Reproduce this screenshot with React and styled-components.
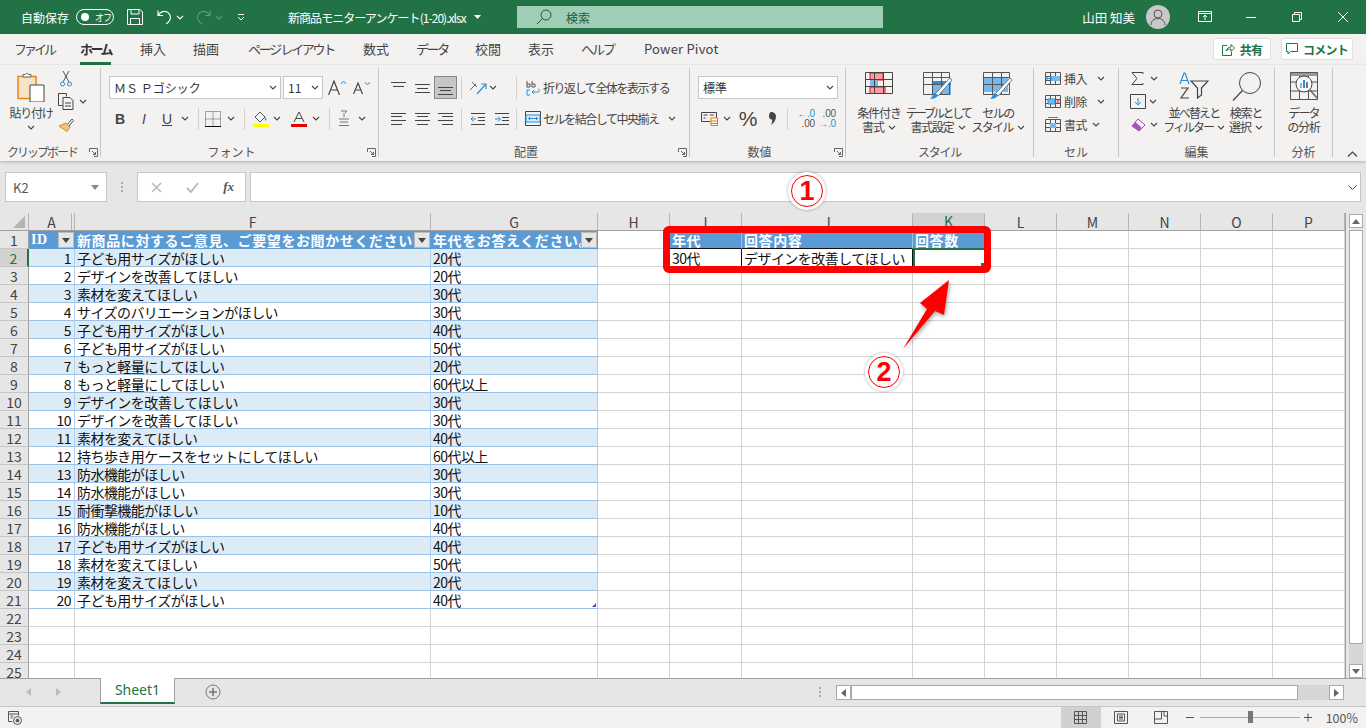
import styled, { createGlobalStyle, css } from "styled-components";

const GlobalStyle = createGlobalStyle`
  html, body { margin: 0; padding: 0; background: #f3f2f1; }
  body { font-family: "Noto Sans CJK JP", "Noto Sans", sans-serif; font-size: 12px; color: #444; overflow: hidden; }
  svg { display: block; flex: none; }
`;

const BLUE = "#2b8fd6";
const INK = "#444";

const Chevron = ({ color = "#444" }) => (
  <svg width="8" height="5" viewBox="0 0 8 5"><path d="M1 1l3 3 3-3" fill="none" stroke={color} strokeWidth="1.1" /></svg>
);
const Launcher = () => (
  <svg width="9" height="9" viewBox="0 0 9 9"><path d="M.5 4V.5h8v8H5M3 3l3.5 3.5M6.5 4v2.5H4" fill="none" stroke="#666" /></svg>
);
const Lines = ({ rows }) => (
  <svg width="15" height="14" viewBox="0 0 15 14">
    {rows.map(([x1, x2, y]) => <path key={y} d={`M${x1} ${y}.5H${x2}`} stroke={INK} />)}
  </svg>
);

const ROWS = [
  [1, "子ども用サイズがほしい", "20代"], [2, "デザインを改善してほしい", "20代"], [3, "素材を変えてほしい", "30代"],
  [4, "サイズのバリエーションがほしい", "30代"], [5, "子ども用サイズがほしい", "40代"], [6, "子ども用サイズがほしい", "50代"],
  [7, "もっと軽量にしてほしい", "20代"], [8, "もっと軽量にしてほしい", "60代以上"], [9, "デザインを改善してほしい", "30代"],
  [10, "デザインを改善してほしい", "30代"], [11, "素材を変えてほしい", "40代"], [12, "持ち歩き用ケースをセットにしてほしい", "60代以上"],
  [13, "防水機能がほしい", "30代"], [14, "防水機能がほしい", "30代"], [15, "耐衝撃機能がほしい", "10代"],
  [16, "防水機能がほしい", "40代"], [17, "子ども用サイズがほしい", "40代"], [18, "素材を変えてほしい", "50代"],
  [19, "素材を変えてほしい", "20代"], [20, "子ども用サイズがほしい", "40代"],
];
const COLS = ["A", "F", "G", "H", "I", "J", "K", "L", "M", "N", "O", "P"];
const TABS = [
  ["ファイル", 66, -3], ["ホーム", 60, -2.5], ["挿入", 53, 0], ["描画", 55, 0], ["ページ レイアウト", 115, -2.3],
  ["数式", 53, 0], ["データ", 59, -2.4], ["校閲", 53, 0], ["表示", 53, 0], ["ヘルプ", 63, -2], ["Power Pivot", 90, 0.2],
];

function cellFor(col, row) {
  if (row === 1) {
    if (col === "A") return { kind: "head", text: "ID", serif: true, filter: true };
    if (col === "F") return { kind: "head", text: "新商品に対するご意見、ご要望をお聞かせください", filter: true };
    if (col === "G") return { kind: "head", text: "年代をお答えください。", filter: true };
    if (col === "I") return { kind: "sub", text: "年代" };
    if (col === "J") return { kind: "sub", text: "回答内容" };
    if (col === "K") return { kind: "subLast", text: "回答数" };
  }
  if (row === 2) {
    if (col === "I") return { kind: "box", text: "30代" };
    if (col === "J") return { kind: "box", text: "デザインを改善してほしい" };
    if (col === "K") return { kind: "selected", text: "" };
  }
  const data = ROWS[row - 2];
  if (data && (col === "A" || col === "F" || col === "G")) {
    const kind = row % 2 === 0 ? "band" : "line";
    if (col === "A") return { kind, text: data[0], right: true };
    if (col === "F") return { kind, text: data[1] };
    return { kind, text: data[2], corner: row === 21 };
  }
  return { kind: "empty", text: "" };
}

function App() {
  const rowNums = Array.from({ length: 25 }, (_, i) => i + 1);
  return (
    <Page>
      <GlobalStyle />
      <TitleBar>
        <AutoSave>自動保存</AutoSave>
        <Toggle><ToggleKnob /><ToggleText>オフ</ToggleText></Toggle>
        <Slot $w={42}>
          <svg width="16" height="16" viewBox="0 0 16 16" fill="none" stroke="#fff"><path d="M.5.500h12.500l2.500 2.500v12.500H.5zM4 .5v4.500h8V.5M3.500 15.500V9.500h9v6" /></svg>
        </Slot>
        <Slot $w={18}>
          <svg width="16" height="16" viewBox="0 0 16 16" fill="none" stroke="#fff" strokeWidth="1.2"><path d="M1 1.500v5h5M1.300 6.300C3 3 6.500 1.500 9.500 2.800c3.500 1.500 5 5.200 3.200 8.500-.8 1.500-2 2.700-3.700 3.500" /></svg>
        </Slot>
        <Slot $w={12}><Chevron color="#fff" /></Slot>
        <Slot $w={4} />
        <Slot $w={26}>
          <svg width="16" height="16" viewBox="0 0 16 16" fill="none" stroke="#5d9a78" strokeWidth="1.2"><path d="M15 1.500v5h-5M14.700 6.300C13 3 9.500 1.500 6.500 2.800c-3.500 1.500-5 5.200-3.200 8.500.8 1.500 2 2.700 3.700 3.500" /></svg>
        </Slot>
        <Slot $w={6}><Chevron color="#5d9a78" /></Slot>
        <Slot $w={38}>
          <svg width="8" height="7" viewBox="0 0 8 7" fill="none" stroke="#fff"><path d="M1 .5h6" /><path d="M1 3l3 3 3-3" /></svg>
        </Slot>
        <FileName>新商品モニターアンケート(1-20).xlsx</FileName>
        <Slot $w={18}><svg width="7" height="4" viewBox="0 0 7 4"><path d="M0 0h7L3.500 4z" fill="#fff" /></svg></Slot>
        <SearchBox>
          <svg width="16" height="16" viewBox="0 0 16 16" fill="none" stroke="#1d5c3a"><circle cx="10" cy="6" r="5" /><path d="M6.500 9.500L1 15" /></svg>
          <SearchText>検索</SearchText>
        </SearchBox>
        <TitleRight>
          <UserName>山田 知美</UserName>
          <Avatar>
            <svg width="16" height="16" viewBox="0 0 16 16" fill="none" stroke="#555"><circle cx="8" cy="5" r="4" /><path d="M1 16c0-4 3-6.500 7-6.500S15 12 15 16" /></svg>
          </Avatar>
          <Slot $w={46}>
            <svg width="14" height="12" viewBox="0 0 14 12" fill="none" stroke="#fff"><path d="M.5.500h13v10H.5zM.5 2.500h13M7 9V4.500M5 6l2-2 2 2" /></svg>
          </Slot>
          <Slot $w={46}><svg width="10" height="1" viewBox="0 0 10 1"><path d="M0 .5h10" stroke="#fff" /></svg></Slot>
          <Slot $w={46}>
            <svg width="10" height="10" viewBox="0 0 10 10" fill="none" stroke="#fff"><path d="M.5 2.500h7v7h-7zM2.500 2.500V.5h7v7h-2" /></svg>
          </Slot>
          <Slot $w={46}><svg width="10" height="10" viewBox="0 0 10 10"><path d="M0 0l10 10M10 0L0 10" stroke="#fff" /></svg></Slot>
        </TitleRight>
      </TitleBar>

      <TabBar>
        {TABS.map(([label, w, ls]) => (
          <Tab key={label} $w={w}>
            <TabLabel $active={label === "ホーム"} $ls={ls}>{label}</TabLabel>
          </Tab>
        ))}
        <TabActions>
          <ShareButton $w={58}>
            <svg width="13" height="13" viewBox="0 0 13 13" fill="none" stroke="#217346"><path d="M5 2.500H.5v10h9V9M4 8c.5-2.500 3-4 5-4V1.500L12.500 5 9 8.500V6C7 6 5 6.500 4 8z" /></svg>
            共有
          </ShareButton>
          <ShareButton $w={72}>
            <svg width="12" height="12" viewBox="0 0 12 12" fill="none" stroke="#217346"><path d="M.5.500h11v8h-7L2 11V8.500H.5z" /></svg>
            コメント
          </ShareButton>
        </TabActions>
      </TabBar>

      <Ribbon>
        <Group $w={101}>
          <GroupBody>
            <LargeTool $w={62}>
              <LargeIcon>
                <svg width="28" height="30" viewBox="0 0 28 30" fill="none">
                  <path d="M1 4.500h18v22H1z" fill="#f8e3c4" stroke="#e08a18" strokeWidth="1.500" />
                  <path d="M6 5V2.500h2.500C9 1 11 1 11.500 2.500H14V5z" fill="#fff" stroke="#666" />
                  <path d="M13 13h14v17H13z" fill="#fff" stroke="#444" />
                </svg>
              </LargeIcon>
              <LargeText $ls={-1.2}>貼り付け</LargeText>
              <LargeText><Chevron /></LargeText>
            </LargeTool>
            <SmallStack $ml={-4}>
              <SmallRow>
                <Slot $w={2} />
                <svg width="12" height="16" viewBox="0 0 12 16" fill="none" stroke="#555"><path d="M3 0l6 11M9 0L3 11" /><circle cx="2.500" cy="13" r="2" stroke={BLUE} /><circle cx="9.500" cy="13" r="2" stroke={BLUE} /></svg>
              </SmallRow>
              <SmallRow>
                <svg width="17" height="17" viewBox="0 0 17 17" fill="none" stroke="#444"><path d="M.5.500h8v3M.5.500v12h4M5 4.500h7l3 3v9H5zM7 10h6M7 13h6" /></svg>
                <Slot $w={4} />
                <Chevron />
              </SmallRow>
              <SmallRow>
                <svg width="16" height="14" viewBox="0 0 16 14" fill="none"><path d="M9 7l5-6 1.500 1.500L11 8" stroke="#555" /><path d="M1 8l7-3 4 4-3 4.500L1 8z" fill="#f5c078" stroke="#e08a18" /></svg>
              </SmallRow>
            </SmallStack>
          </GroupBody>
          <GroupLabel $ls={-2} $launch>クリップボード<LauncherSpot><Launcher /></LauncherSpot></GroupLabel>
        </Group>

        <Group $w={278}>
          <GroupBody $stack>
            <ToolRow $pad={8}>
              <ComboBox $w={172}>
                <ComboText>ＭＳ Ｐゴシック</ComboText>
                <Chevron />
              </ComboBox>
              <Slot $w={2} />
              <ComboBox $w={40}><ComboText>11</ComboText><Chevron /></ComboBox>
              <Slot $w={5} />
              <Tool $w={19}>
                <svg width="19" height="15" viewBox="0 0 19 15" fill="none" stroke={INK}><path d="M.5 15L6 1l5.500 14M2.500 10h7" strokeWidth="1.200" /><path d="M13 4l2.500-3L18 4" stroke={BLUE} /></svg>
              </Tool>
              <Slot $w={6} />
              <Tool $w={19}>
                <svg width="19" height="13" viewBox="0 0 19 13" fill="none" stroke={INK}><path d="M.5 13L5 2l4.500 11M2 9h6" strokeWidth="1.200" /><path d="M12 1l2.500 3L17 1" stroke={BLUE} /></svg>
              </Tool>
            </ToolRow>
            <ToolRow $pad={7}>
              <Tool $w={24}><ToolGlyph $bold>B</ToolGlyph></Tool>
              <Tool $w={24}><ToolGlyph $italic>I</ToolGlyph></Tool>
              <Tool $w={22}><ToolGlyph $under>U</ToolGlyph></Tool>
              <Tool $w={14}><Chevron /></Tool>
              <ToolSep $ml={6} $mr={3} />
              <Tool $w={22}>
                <svg width="16" height="16" viewBox="0 0 16 16" fill="none" stroke="#555" strokeDasharray="1 1"><path d="M.5.500h15v15H.5zM8 .5v15M.5 8h15" /><path d="M0 15.500h16" stroke="#111" strokeDasharray="none" /></svg>
              </Tool>
              <Tool $w={14}><Chevron /></Tool>
              <ToolSep $ml={6} $mr={5} />
              <Tool $w={22}>
                <svg width="16" height="16" viewBox="0 0 16 16" fill="none"><path d="M7 1L2 6l5 5 5-5z" stroke="#555" /><path d="M12 6c1.500 1.500 2 3 1 3.500s-1.500-1-1-3.500z" fill={BLUE} /><path d="M0 13h16v3H0z" fill="#ffff00" /></svg>
              </Tool>
              <Tool $w={10}><Chevron /></Tool>
              <Slot $w={6} />
              <Tool $w={22}>
                <svg width="16" height="16" viewBox="0 0 16 16" fill="none"><path d="M3 11L8 1l5 10M5 7.500h6" stroke="#444" /><path d="M0 13h16v3H0z" fill="#e60000" /></svg>
              </Tool>
              <Tool $w={12}><Chevron /></Tool>
              <ToolSep $ml={7} $mr={2} />
              <Tool $w={24}>
                <svg width="12" height="17" viewBox="0 0 12 17" fill="none" stroke="#777"><path d="M3 1h6L7 3M6 3v4M1 9h10M2 12h8M1 15.500h10" /></svg>
              </Tool>
              <Tool $w={12}><Chevron /></Tool>
            </ToolRow>
          </GroupBody>
          <GroupLabel $launch>フォント<LauncherSpot><Launcher /></LauncherSpot></GroupLabel>
        </Group>

        <Group $w={311}>
          <GroupBody $stack>
            <ToolRow $pad={7}>
              <Tool $w={24}><Lines rows={[[0, 15, 1], [2, 13, 5]]} /></Tool>
              <Tool $w={24}><Lines rows={[[0, 15, 3], [2, 13, 7], [0, 15, 11]]} /></Tool>
              <SelectedTool $w={23}><Lines rows={[[0, 15, 6], [2, 13, 9], [0, 15, 13]]} /></SelectedTool>
              <ToolSep $ml={4} $mr={4} />
              <Tool $w={24}>
                <svg width="18" height="14" viewBox="0 0 18 14" fill="none"><path d="M1 9l6-6M3 1l5 5" stroke="#666" /><path d="M8 13l8-9M12 3h5v5" stroke={BLUE} strokeWidth="1.200" /></svg>
              </Tool>
              <Tool $w={6}><Chevron /></Tool>
              <ToolSep $ml={20} $mr={7} />
              <Tool $w={18}>
                <svg width="15" height="16" viewBox="0 0 15 16" fill="none"><path d="M1 7.500V1M1 4h3v3H1M6 1v6h3V4H6" stroke="#555" /><path d="M4 15H1v-5h3M6 12h6c2 0 2-3 0-3M8 10l-2 2 2 2" stroke={BLUE} /></svg>
              </Tool>
              <WideText>折り返して全体を表示する</WideText>
            </ToolRow>
            <ToolRow $pad={7}>
              <Tool $w={24}><Lines rows={[[0, 15, 1], [0, 11, 4], [0, 15, 8], [0, 11, 12]]} /></Tool>
              <Tool $w={24}><Lines rows={[[0, 15, 1], [2, 13, 4], [0, 15, 8], [2, 13, 12]]} /></Tool>
              <Tool $w={23}><Lines rows={[[0, 15, 1], [4, 15, 4], [0, 15, 8], [4, 15, 12]]} /></Tool>
              <ToolSep $ml={4} $mr={4} />
              <Tool $w={24}>
                <svg width="14" height="12" viewBox="0 0 14 12" fill="none"><path d="M0 .5h14M7 4.500h7M7 7.500h7M0 11.500h14" stroke="#444" /><path d="M5 6H0M2.500 3.500L0 6l2.500 2.500" stroke={BLUE} /></svg>
              </Tool>
              <Tool $w={24}>
                <svg width="14" height="12" viewBox="0 0 14 12" fill="none"><path d="M0 .5h14M7 4.500h7M7 7.500h7M0 11.500h14" stroke="#444" /><path d="M0 6h5M3 3.500L5.500 6 3 8.500" stroke={BLUE} /></svg>
              </Tool>
              <ToolSep $ml={2} $mr={7} />
              <Tool $w={18}>
                <svg width="16" height="15" viewBox="0 0 16 15" fill="none" stroke="#444"><path d="M.5.500h15v14H.5z" /><path d="M1 4h14v7H1z" fill="#d6ecfb" stroke={BLUE} /><path d="M3.500 7.500h9M5 6L3.500 7.500 5 9M11 6l1.500 1.500L11 9" stroke={BLUE} /></svg>
              </Tool>
              <WideText>セルを結合して中央揃え</WideText>
              <Slot $w={9} />
              <Chevron />
            </ToolRow>
          </GroupBody>
          <GroupLabel $launch>配置<LauncherSpot><Launcher /></LauncherSpot></GroupLabel>
        </Group>

        <Group $w={156}>
          <GroupBody $stack>
            <ToolRow $pad={8}>
              <ComboBox $w={140}><ComboText>標準</ComboText><Chevron /></ComboBox>
            </ToolRow>
            <ToolRow $pad={9}>
              <Tool $w={20}>
                <svg width="17" height="15" viewBox="0 0 17 15" fill="none"><path d="M.5 1.500h15V10M.5 1.500v9H9M2.500 4h4M9 4h4M2.500 7h2" stroke="#444" /><path d="M10 7h6.500v7.500H10zM10 10h6.500M10 12.500h6.500" stroke="#e57a00" fill="#fff" /></svg>
              </Tool>
              <Tool $w={16}><Chevron /></Tool>
              <Tool $w={26}><PercentGlyph>%</PercentGlyph></Tool>
              <Tool $w={24}>
                <svg width="8" height="13" viewBox="0 0 8 13"><path d="M2 0c3 0 5 2 5 4.500 0 3.500-2 6.500-5 8.500 1-2.500 1.500-4 1-5.500C1 7.500 0 6 0 4s1-4 2-4z" fill="#444" /></svg>
              </Tool>
              <ToolSep $ml={2} $mr={5} />
              <Tool $w={26}><DecimalGlyph $flip={false} /></Tool>
              <Tool $w={16}><DecimalGlyph $flip /></Tool>
            </ToolRow>
          </GroupBody>
          <GroupLabel $launch>数値<LauncherSpot><Launcher /></LauncherSpot></GroupLabel>
        </Group>

        <Group $w={188}>
          <GroupBody>
            <LargeTool $w={66}>
              <LargeIcon>
                <svg width="28" height="22" viewBox="0 0 28 22" fill="none">
                  <path d="M5 1h13v7H5zM5 15h15v7H5z" fill="#ff9da4" stroke="#e01010" />
                  <path d="M5 8h8v7H5z" fill="#79b8ea" />
                  <path d="M.5.500h27v21H.5zM.5 7.500h27M.5 14.500h27M9.500.5v21M18.500.5v21" stroke="#444" />
                </svg>
              </LargeIcon>
              <LargeText $ls={-1.1}>条件付き</LargeText>
              <LargeText $ls={-1}>書式<ChevronGap><Chevron /></ChevronGap></LargeText>
            </LargeTool>
            <LargeTool $w={52}>
              <LargeIcon><BrushTable full /></LargeIcon>
              <LargeText $ls={-2.6}>テーブルとして</LargeText>
              <LargeText $ls={-1.2}>書式設定<ChevronGap><Chevron /></ChevronGap></LargeText>
            </LargeTool>
            <LargeTool $w={68}>
              <LargeIcon><BrushTable /></LargeIcon>
              <LargeText $ls={-1.5}>セルの</LargeText>
              <LargeText $ls={-1.7}>スタイル<ChevronGap><Chevron /></ChevronGap></LargeText>
            </LargeTool>
          </GroupBody>
          <GroupLabel $ls={-1.2}>スタイル</GroupLabel>
        </Group>

        <Group $w={85}>
          <GroupBody>
            <SmallStack>
              <SmallRow $pad={11}>
                <svg width="16" height="13" viewBox="0 0 16 13" fill="none"><path d="M.5.500h15v12H.5zM.5 4.500h15M.5 8.500h15M5.500.5v12M10.500.5v12" stroke="#555" /><path d="M6 4h9v5H6z" fill="#79b8ea" /><path d="M7 6.500H1M3 4.500l-2 2 2 2" stroke={BLUE} /></svg>
                <CellToolText>挿入</CellToolText>
                <Slot $w={10} />
                <Chevron />
              </SmallRow>
              <SmallRow $pad={11}>
                <svg width="16" height="13" viewBox="0 0 16 13" fill="none"><path d="M.5.500h15v12H.5zM.5 4.500h15M.5 8.500h15M5.500.5v12M10.500.5v12" stroke="#555" /><path d="M3 4h7v5H3z" fill="#79b8ea" stroke={BLUE} /><path d="M11 4.500l4 4M15 4.500l-4 4" stroke="#e03030" /></svg>
                <CellToolText>削除</CellToolText>
                <Slot $w={10} />
                <Chevron />
              </SmallRow>
              <SmallRow $pad={11}>
                <svg width="16" height="15" viewBox="0 0 16 15" fill="none"><path d="M.5 2.500h15v12H.5zM.5 6.500h15M.5 10.500h15M5.500 2.500v12M10.500 2.500v12" stroke="#555" /><path d="M5 6h6v5H5z" fill="#79b8ea" /><path d="M3 .5h10" stroke={BLUE} /></svg>
                <CellToolText>書式</CellToolText>
                <Slot $w={5} />
                <Chevron />
              </SmallRow>
            </SmallStack>
          </GroupBody>
          <GroupLabel>セル</GroupLabel>
        </Group>

        <Group $w={156}>
          <GroupBody>
            <SmallStack $w={47}>
              <SmallRow $pad={12}>
                <svg width="13" height="13" viewBox="0 0 13 13" fill="none" stroke="#444"><path d="M12 2V.5H1l5 6-5 6h11V11" /></svg>
                <Slot $w={6} />
                <Chevron />
              </SmallRow>
              <SmallRow $pad={11}>
                <svg width="16" height="15" viewBox="0 0 16 15" fill="none"><path d="M.5.500h15v14H.5z" stroke="#444" /><path d="M8 4v7M5 8l3 3 3-3" stroke={BLUE} /></svg>
                <Slot $w={3} />
                <Chevron />
              </SmallRow>
              <SmallRow $pad={12}>
                <svg width="15" height="14" viewBox="0 0 15 14" fill="none"><path d="M1 8l6-7 7 6-6 6z" fill="#fff" stroke="#a23cb4" /><path d="M1 8l3.500-4 6 5.500L8 13z" fill="#b04ec4" /></svg>
                <Slot $w={4} />
                <Chevron />
              </SmallRow>
            </SmallStack>
            <LargeTool $w={56}>
              <LargeIcon>
                <svg width="30" height="28" viewBox="0 0 30 28" fill="none">
                  <path d="M1 12L5 1h1l4 11M2.500 8.500h6" stroke={BLUE} strokeWidth="1.200" />
                  <path d="M2 16h7l-7 10h8" stroke="#444" strokeWidth="1.200" />
                  <path d="M12 9h17l-6.500 7v7l-4 3V16z" stroke="#444" strokeWidth="1.200" />
                </svg>
              </LargeIcon>
              <LargeText $ls={-1.8}>並べ替えと</LargeText>
              <LargeText $ls={-2}>フィルター<ChevronGap><Chevron /></ChevronGap></LargeText>
            </LargeTool>
            <LargeTool $w={48}>
              <LargeIcon>
                <svg width="29" height="29" viewBox="0 0 29 29" fill="none" stroke="#444"><circle cx="18" cy="11" r="10.500" /><path d="M10.500 18.500L1 28.500" strokeWidth="1.200" /></svg>
              </LargeIcon>
              <LargeText $ls={-1.2}>検索と</LargeText>
              <LargeText $ls={-1}>選択<ChevronGap><Chevron /></ChevronGap></LargeText>
            </LargeTool>
          </GroupBody>
          <GroupLabel>編集</GroupLabel>
        </Group>

        <Group $w={58}>
          <GroupBody>
            <LargeTool $w={57}>
              <LargeIcon>
                <svg width="28" height="28" viewBox="0 0 28 28" fill="none">
                  <path d="M0 0h28v4H0z" fill="#999" />
                  <path d="M.5.500h27v27H.5zM.5 10h27M.5 19h27M9.500 4v24M18.500 4v24" stroke="#555" />
                  <circle cx="14" cy="12" r="8" fill="#fff" stroke="#444" />
                  <path d="M10 11h2v5h-2z" fill="#79b8ea" /><path d="M13 8h2v8h-2z" fill="#2b8fd6" /><path d="M16 10h2v6h-2z" fill="#777" />
                  <path d="M20 18l7 8" stroke="#666" strokeWidth="1.500" />
                </svg>
              </LargeIcon>
              <LargeText $ls={-1.8}>データ</LargeText>
              <LargeText $ls={-1.2}>の分析</LargeText>
            </LargeTool>
          </GroupBody>
          <GroupLabel>分析</GroupLabel>
        </Group>
        <Collapse>
          <svg width="11" height="6" viewBox="0 0 11 6"><path d="M1 5.500l4.500-4.500L10 5.500" fill="none" stroke="#444" strokeWidth="1.200" /></svg>
        </Collapse>
      </Ribbon>

      <FormulaBar>
        <NameBox>
          K2
          <svg width="8" height="5" viewBox="0 0 8 5"><path d="M0 0h8L4 5z" fill="#888" /></svg>
        </NameBox>
        <BarDots><i /><i /><i /></BarDots>
        <FormulaButtons>
          <svg width="11" height="11" viewBox="0 0 11 11"><path d="M1 1l9 9M10 1l-9 9" stroke="#b8b8b8" strokeWidth="1.500" /></svg>
          <svg width="13" height="11" viewBox="0 0 13 11"><path d="M1 6l4 4 7-9" fill="none" stroke="#b8b8b8" strokeWidth="1.800" /></svg>
          <FxText>fx</FxText>
        </FormulaButtons>
        <FormulaInput>
          <svg width="9" height="5" viewBox="0 0 9 5"><path d="M.5.500l4 4 4-4" fill="none" stroke="#444" /></svg>
        </FormulaInput>
      </FormulaBar>

      <SheetArea>
        <SheetGrid>
          <Corner><svg width="12" height="12" viewBox="0 0 12 12"><path d="M12 0v12H0z" fill="#b4b4b4" /></svg></Corner>
          {COLS.map((c) => <ColHead key={c} $selected={c === "K"} $hiddenNext={c === "A"}>{c}</ColHead>)}
          {rowNums.map((r) => [
            <RowHead key={`h${r}`} $selected={r === 2}>{r}</RowHead>,
            ...COLS.map((c) => {
              const cell = cellFor(c, r);
              return (
                <Cell key={c + r} $kind={cell.kind} $right={cell.right} $corner={cell.corner} $serif={cell.serif}>
                  <CellText $head={cell.kind === "head" || cell.kind === "sub" || cell.kind === "subLast"}>{cell.text}</CellText>
                  {cell.filter && (
                    <FilterButton><svg width="8" height="5" viewBox="0 0 8 5"><path d="M0 0h8L4 5z" fill="#444" /></svg></FilterButton>
                  )}
                </Cell>
              );
            }),
          ])}
        </SheetGrid>
        <VScroll>
          <ScrollButton><svg width="8" height="5" viewBox="0 0 8 5"><path d="M4 0l4 5H0z" fill="#666" /></svg></ScrollButton>
          <VThumb />
          <VTrack />
          <ScrollButton><svg width="8" height="5" viewBox="0 0 8 5"><path d="M0 0h8L4 5z" fill="#666" /></svg></ScrollButton>
        </VScroll>
      </SheetArea>

      <SheetBar>
        <SheetNav>
          <svg width="5" height="8" viewBox="0 0 5 8"><path d="M5 0v8L0 4z" fill="#bbb" /></svg>
          <svg width="5" height="8" viewBox="0 0 5 8"><path d="M0 0v8l5-4z" fill="#bbb" /></svg>
        </SheetNav>
        <SheetTab>Sheet1</SheetTab>
        <AddSheet>
          <svg width="16" height="16" viewBox="0 0 16 16" fill="none" stroke="#777"><circle cx="8" cy="8" r="7" /><path d="M8 4v8M4 8h8" strokeWidth="1.600" /></svg>
        </AddSheet>
        <BarDotsSmall><i /><i /><i /></BarDotsSmall>
        <HScroll>
          <HButton><svg width="5" height="8" viewBox="0 0 5 8"><path d="M5 0v8L0 4z" fill="#666" /></svg></HButton>
          <HThumb />
          <HTrack />
          <HButton><svg width="5" height="8" viewBox="0 0 5 8"><path d="M0 0v8l5-4z" fill="#666" /></svg></HButton>
        </HScroll>
      </SheetBar>

      <StatusBar>
        <svg width="14" height="14" viewBox="0 0 14 14" fill="none" stroke="#555"><path d="M.5.500h10v4M.5.500v10h4M.5 3h10M2.500 5h3M2.500 7h2" /><circle cx="9.500" cy="9.500" r="4" /><circle cx="9.500" cy="9.500" r="1.500" fill="#555" /></svg>
        <StatusRight>
          <ViewButton $active>
            <svg width="13" height="13" viewBox="0 0 13 13" fill="none" stroke="#555"><path d="M.5.500h12v12H.5zM4.500.5v12M8.500.5v12M.5 4.500h12M.5 8.500h12" /></svg>
          </ViewButton>
          <ViewButton>
            <svg width="14" height="13" viewBox="0 0 14 13" fill="none" stroke="#555"><path d="M.5.500h13v12H.5zM3.500 3h7v7h-7zM5 5h4M5 6.500h4M5 8h4" /></svg>
          </ViewButton>
          <ViewButton>
            <svg width="14" height="13" viewBox="0 0 14 13" fill="none" stroke="#555"><path d="M.5.500h13v12H.5zM.5 8h7V.5" /><path d="M10 .5V5h3.500" /></svg>
          </ViewButton>
          <ZoomSlider>
            <svg width="8" height="1" viewBox="0 0 8 1"><path d="M0 .5h8" stroke="#555" /></svg>
            <ZoomTrack><ZoomThumb /></ZoomTrack>
            <svg width="8" height="9" viewBox="0 0 8 9"><path d="M0 4.500h8M4 .5v8" stroke="#555" /></svg>
          </ZoomSlider>
          <ZoomValue>100%</ZoomValue>
        </StatusRight>
      </StatusBar>

      <RedFrame />
      <Badge $x={788} $y={172}><BadgeRing>1</BadgeRing></Badge>
      <Badge $x={865} $y={353}><BadgeRing>2</BadgeRing></Badge>
      <Arrow width="52" height="78" viewBox="0 0 52 78">
        <path d="M3 74L27 34 20 28 49 5 44 40 35 36z" fill="#f00" />
      </Arrow>
    </Page>
  );
}

function BrushTable({ full }) {
  return (
    <svg width="31" height="28" viewBox="0 0 31 28" fill="none">
      <path d={full ? "M10 9h18v14H10z" : "M1 5h24v15H1z"} fill="#79b8ea" />
      {full && <path d="M10 9h18v4H10z" fill="#2b8fd6" />}
      <path d="M.5.500h26v22H.5zM.5 5.500h26M.5 12.500h26M9.500.5v22M18.500.5v22" stroke="#555" />
      <path d="M12 22L27 6l2 2-14 16z" fill="#fff" stroke="#777" />
      <path d="M7 27c3 0 7-1 8-4l-3-2c-3 0-2 4-5 6z" fill="#2b8fd6" />
    </svg>
  );
}

function DecimalGlyph({ $flip }) {
  return (
    <DecimalBox>
      <DecimalLine $blue={!$flip}>{$flip ? ".00" : "←.0"}</DecimalLine>
      <DecimalLine $blue={$flip}>{$flip ? "→.0" : ".00"}</DecimalLine>
    </DecimalBox>
  );
}

const Page = styled.div`
  position: relative;
  width: 1366px;
  height: 728px;
  overflow: hidden;
  display: flex;
  flex-direction: column;
  background: #f3f2f1;
`;

const TitleBar = styled.div`
  height: 34px;
  flex: none;
  display: flex;
  align-items: center;
  padding-left: 21px;
  background: #217346;
  color: #fff;
`;

const AutoSave = styled.div`
  width: 55px;
  font-size: 12px;
`;

const Toggle = styled.div`
  width: 38px;
  height: 16px;
  box-sizing: border-box;
  border: 1px solid #fff;
  border-radius: 8px;
  display: flex;
  align-items: center;
  padding-left: 4px;
`;

const ToggleKnob = styled.div`
  width: 8px;
  height: 8px;
  border-radius: 50%;
  background: #fff;
`;

const ToggleText = styled.span`
  font-size: 9px;
  margin-left: 6px;
  letter-spacing: -1px;
`;

const Slot = styled.div`
  width: ${(p) => p.$w}px;
  flex: none;
  display: flex;
  align-items: center;
  justify-content: center;
`;

const FileName = styled.div`
  width: 180px;
  margin-left: 28px;
  font-size: 12px;
  letter-spacing: -0.95px;
  white-space: nowrap;
`;

const SearchBox = styled.div`
  width: 366px;
  height: 22px;
  margin-left: 31px;
  padding-left: 19px;
  box-sizing: border-box;
  display: flex;
  align-items: center;
  gap: 14px;
  background: #a0cdb5;
`;

const SearchText = styled.span`
  color: #1d5c3a;
  font-size: 12px;
`;

const TitleRight = styled.div`
  margin-left: auto;
  display: flex;
  align-items: center;
`;

const UserName = styled.div`
  margin-right: 11px;
  font-size: 12.500px;
`;

const Avatar = styled.div`
  width: 24px;
  height: 24px;
  margin-right: 12px;
  border-radius: 50%;
  background: #c8c8c8;
  display: flex;
  align-items: center;
  justify-content: center;
`;

const TabBar = styled.div`
  height: 31px;
  flex: none;
  display: flex;
  padding-left: 14px;
  padding-right: 13px;
`;

const Tab = styled.div`
  width: ${(p) => p.$w}px;
  flex: none;
  font-size: 13px;
  white-space: nowrap;
`;

const TabLabel = styled.span`
  display: inline-block;
  height: 26px;
  padding-top: 2px;
  line-height: 25px;
  letter-spacing: ${(p) => p.$ls}px;
  ${(p) => p.$active && css`
    font-weight: 700;
    color: #333;
    border-bottom: 3px solid #217346;
  `}
`;

const TabActions = styled.div`
  margin-left: auto;
  padding-top: 4px;
  display: flex;
  align-items: flex-start;
  gap: 10px;
`;

const ShareButton = styled.div`
  width: ${(p) => p.$w}px;
  height: 22px;
  box-sizing: border-box;
  background: #fff;
  border: 1px solid #e1dfdd;
  border-radius: 2px;
  display: flex;
  align-items: center;
  justify-content: center;
  gap: 5px;
  color: #217346;
  font-weight: 700;
  font-size: 12px;
  letter-spacing: -0.8px;
`;

const Ribbon = styled.div`
  height: 96px;
  flex: none;
  display: flex;
  padding-top: 3px;
  box-sizing: border-box;
  position: relative;
  z-index: 1;
  background: #f3f2f1;
  box-shadow: 0 1px 3px rgba(0, 0, 0, 0.25);
`;

const Group = styled.div`
  width: ${(p) => p.$w}px;
  height: 89px;
  flex: none;
  box-sizing: border-box;
  border-right: 1px solid #c6c6c6;
  display: flex;
  flex-direction: column;
`;

const GroupBody = styled.div`
  flex: 1;
  min-height: 0;
  display: flex;
  ${(p) => p.$stack && css`
    flex-direction: column;
    gap: 8px;
    padding-top: 8px;
  `}
`;

const GroupLabel = styled.div`
  position: relative;
  height: 16px;
  margin-bottom: -3px;
  box-sizing: border-box;
  padding-right: ${(p) => (p.$launch ? 16 : 0)}px;
  text-align: center;
  font-size: 12px;
  line-height: 16px;
  color: #555;
  letter-spacing: ${(p) => p.$ls || 0}px;
  white-space: nowrap;
`;

const LauncherSpot = styled.span`
  position: absolute;
  right: 2px;
  top: 4px;
`;

const ToolRow = styled.div`
  height: 23px;
  display: flex;
  align-items: center;
  padding-left: ${(p) => p.$pad}px;
`;

const Tool = styled.div`
  width: ${(p) => p.$w}px;
  height: 23px;
  flex: none;
  display: flex;
  align-items: center;
  justify-content: center;
`;

const SelectedTool = styled(Tool)`
  box-sizing: border-box;
  background: #c6c6c6;
  border: 1px solid #8a8a8a;
`;

const ToolSep = styled.div`
  width: 1px;
  height: 22px;
  flex: none;
  margin: 0 ${(p) => p.$mr}px 0 ${(p) => p.$ml}px;
  background: #d0d0d0;
`;

const ToolGlyph = styled.span`
  font-family: "Liberation Sans", sans-serif;
  font-size: 14px;
  font-weight: ${(p) => (p.$bold ? 700 : 400)};
  font-style: ${(p) => (p.$italic ? "italic" : "normal")};
  text-decoration: ${(p) => (p.$under ? "underline" : "none")};
`;

const PercentGlyph = styled.span`
  font-family: "Liberation Sans", sans-serif;
  font-size: 21px;
  line-height: 23px;
`;

const DecimalBox = styled.div`
  display: flex;
  flex-direction: column;
  align-items: flex-end;
  font-family: "Liberation Sans", sans-serif;
  font-size: 10px;
  line-height: 10px;
  letter-spacing: -0.2px;
`;

const DecimalLine = styled.span`
  color: ${(p) => (p.$blue ? BLUE : "#555")};
`;

const ComboBox = styled.div`
  width: ${(p) => p.$w}px;
  height: 23px;
  flex: none;
  box-sizing: border-box;
  background: #fff;
  border: 1px solid #c6c6c6;
  display: flex;
  align-items: center;
  justify-content: space-between;
  padding: 0 3px 0 4px;
`;

const ComboText = styled.span`
  font-size: 12px;
  color: #333;
  white-space: nowrap;
`;

const WideText = styled.span`
  font-size: 12px;
  letter-spacing: -1.45px;
  white-space: nowrap;
  margin-left: 1px;
  flex: none;
`;

const LargeTool = styled.div`
  width: ${(p) => p.$w}px;
  flex: none;
  display: flex;
  flex-direction: column;
  align-items: center;
  padding-top: 4px;
`;

const LargeIcon = styled.div`
  height: 34px;
  display: flex;
  align-items: flex-start;
  justify-content: center;
`;

const LargeText = styled.div`
  height: 14px;
  display: flex;
  align-items: center;
  justify-content: center;
  font-size: 12px;
  line-height: 14px;
  white-space: nowrap;
  letter-spacing: ${(p) => p.$ls || 0}px;
`;

const ChevronGap = styled.span`
  margin-left: 4px;
`;

const SmallStack = styled.div`
  flex: ${(p) => (p.$w ? `0 0 ${p.$w}px` : "1")};
  margin: -1px 0 0 ${(p) => p.$ml || 0}px;
  display: flex;
  flex-direction: column;
`;

const SmallRow = styled.div`
  height: 23px;
  display: flex;
  align-items: center;
  padding-left: ${(p) => p.$pad ?? 0}px;
`;

const CellToolText = styled.span`
  margin-left: 3px;
  font-size: 12px;
  width: 23px;
  letter-spacing: -0.5px;
  white-space: nowrap;
`;

const Collapse = styled.div`
  position: absolute;
  right: 8px;
  bottom: 4px;
`;

const FormulaBar = styled.div`
  height: 52px;
  flex: none;
  box-sizing: border-box;
  background: #e6e6e6;
  display: flex;
  align-items: flex-start;
  padding: 11px 5px 0 5px;
`;

const NameBox = styled.div`
  width: 102px;
  height: 30px;
  box-sizing: border-box;
  background: #fff;
  border: 1px solid #c6c6c6;
  display: flex;
  align-items: center;
  justify-content: space-between;
  padding: 0 7px;
  font-size: 13px;
  color: #555;
`;

const BarDots = styled.div`
  width: 30px;
  height: 30px;
  display: flex;
  flex-direction: column;
  align-items: center;
  justify-content: center;
  gap: 2px;
  i {
    width: 2px;
    height: 2px;
    background: #aaa;
  }
`;

const FormulaButtons = styled.div`
  width: 109px;
  height: 30px;
  box-sizing: border-box;
  background: #fff;
  border: 1px solid #c6c6c6;
  display: flex;
  align-items: center;
  justify-content: space-between;
  padding: 0 11px 0 13px;
`;

const FxText = styled.span`
  font-family: "Liberation Serif", serif;
  font-style: italic;
  font-weight: 700;
  font-size: 13px;
  color: #555;
`;

const FormulaInput = styled.div`
  flex: 1;
  height: 30px;
  margin-left: 4px;
  box-sizing: border-box;
  background: #fff;
  border: 1px solid #c6c6c6;
  display: flex;
  align-items: center;
  justify-content: flex-end;
  padding-right: 3px;
`;

const SheetArea = styled.div`
  height: 465px;
  flex: none;
  display: flex;
  background: #fff;
  overflow: hidden;
`;

const SheetGrid = styled.div`
  width: 1345px;
  height: 465px;
  flex: none;
  display: grid;
  grid-template-columns: 29px 46px 356px 167px 72px 72px 171px 72px 72px 72px 72px 72px 72px;
  grid-auto-rows: 18px;
  overflow: hidden;
  font-size: 14px;
  color: #111;
`;

const headBase = css`
  background: #e6e6e6;
  display: flex;
  align-items: center;
  justify-content: center;
  box-sizing: border-box;
  color: #444;
`;

const Corner = styled.div`
  ${headBase}
  justify-content: flex-end;
  align-items: flex-end;
  padding: 0 3px 2px 0;
  border-right: 1px solid #b4b4b4;
  border-bottom: 1px solid #a0a0a0;
`;

const ColHead = styled.div`
  ${headBase}
  border-right: 1px solid #b4b4b4;
  border-bottom: 1px solid #a0a0a0;
  font-size: 14px;
  line-height: 16px;
  overflow: visible;
  ${(p) => p.$hiddenNext && css`
    box-shadow: inset -2px 0 0 #e6e6e6, inset -3px 0 0 #b4b4b4;
  `}
  ${(p) => p.$selected && css`
    background: #d2d2d2;
    color: #217346;
    border-bottom: 2px solid #217346;
  `}
`;

const RowHead = styled.div`
  ${headBase}
  border-right: 1px solid #a0a0a0;
  border-bottom: 1px solid #c6c6c6;
  font-size: 14px;
  ${(p) => p.$selected && css`
    background: #d2d2d2;
    color: #217346;
    border-right: 2px solid #217346;
  `}
`;

const cellKinds = {
  empty: css`
    border-right: 1px solid #d4d4d4;
    border-bottom: 1px solid #d4d4d4;
  `,
  head: css`
    background: #5b9bd5;
    color: #fff;
    font-weight: 700;
  `,
  sub: css`
    background: #5b9bd5;
    color: #fff;
    font-weight: 700;
    border-right: 1px solid #9bc2e6;
    border-bottom: 1px solid #111;
  `,
  subLast: css`
    background: #5b9bd5;
    color: #fff;
    font-weight: 700;
    border-bottom: 1px solid #217346;
  `,
  box: css`
    border-right: 1px solid #111;
    border-bottom: 1px solid #111;
    background: #fff;
  `,
  selected: css`
    background: #fff;
    box-shadow: inset 2px 0 0 #217346, inset 0 1px 0 #217346;
    &::after {
      content: "";
      position: absolute;
      right: 1px;
      bottom: 1px;
      width: 3px;
      height: 3px;
      background: #217346;
    }
  `,
  band: css`
    background: #ddebf7;
    border-right: 1px solid #b4cfe8;
    border-bottom: 1px solid #9bc2e6;
  `,
  line: css`
    background: #fff;
    border-right: 1px solid #b4cfe8;
    border-bottom: 1px solid #9bc2e6;
  `,
};

const Cell = styled.div`
  position: relative;
  box-sizing: border-box;
  display: flex;
  align-items: center;
  justify-content: ${(p) => (p.$right ? "flex-end" : "flex-start")};
  padding: ${(p) => (p.$right ? "0 3px 0 0" : "0 0 0 2px")};
  overflow: hidden;
  white-space: nowrap;
  ${(p) => cellKinds[p.$kind]}
  ${(p) => p.$serif && css`font-family: "Liberation Serif", serif;`}
  ${(p) => p.$corner && css`
    &::after {
      content: "";
      position: absolute;
      right: 1px;
      bottom: 1px;
      border-left: 4px solid transparent;
      border-bottom: 4px solid #3f51b5;
    }
  `}
`;

const CellText = styled.span`
  flex: ${(p) => (p.$head ? "1" : "none")};
  min-width: 0;
  overflow: hidden;
  letter-spacing: ${(p) => (p.$head ? "0.6px" : "-0.55px")};
  line-height: 18px;
`;

const FilterButton = styled.div`
  width: 16px;
  height: 16px;
  flex: none;
  box-sizing: border-box;
  margin-right: 1px;
  background: #e6e6e6;
  border: 1px solid #bbb;
  display: flex;
  align-items: center;
  justify-content: center;
`;

const VScroll = styled.div`
  flex: 1;
  box-sizing: border-box;
  background: #e6e6e6;
  display: flex;
  flex-direction: column;
  padding: 1px 3px 0 3px;
  border-left: 1px solid #a0a0a0;
`;

const ScrollButton = styled.div`
  height: 14px;
  flex: none;
  box-sizing: border-box;
  background: #fff;
  border: 1px solid #aaa;
  display: flex;
  align-items: center;
  justify-content: center;
`;

const VThumb = styled.div`
  height: 414px;
  flex: none;
  margin-top: 2px;
  box-sizing: border-box;
  background: #fff;
  border: 1px solid #aaa;
`;

const VTrack = styled.div`
  height: 20px;
  flex: none;
  background: #d6d6d6;
`;

const SheetBar = styled.div`
  height: 28px;
  flex: none;
  box-sizing: border-box;
  background: #e6e6e6;
  border-top: 1px solid #a0a0a0;
  display: flex;
  align-items: flex-start;
`;

const SheetNav = styled.div`
  width: 100px;
  height: 26px;
  flex: none;
  box-sizing: border-box;
  padding-left: 26px;
  display: flex;
  align-items: center;
  gap: 25px;
`;

const SheetTab = styled.div`
  width: 73px;
  height: 24px;
  background: #fff;
  border-left: 1px solid #a0a0a0;
  border-right: 1px solid #a0a0a0;
  border-bottom: 2px solid #217346;
  color: #217346;
  font-family: "Noto Sans", sans-serif;
  font-size: 14px;
  line-height: 24px;
  text-align: center;
  margin-top: -1px;
`;

const AddSheet = styled.div`
  margin-left: 30px;
  height: 26px;
  display: flex;
  align-items: center;
`;

const BarDotsSmall = styled(BarDots)`
  margin-left: 592px;
  width: 14px;
  height: 26px;
`;

const HScroll = styled.div`
  margin-top: 6px;
  margin-left: 9px;
  width: 508px;
  height: 15px;
  display: flex;
`;

const HButton = styled.div`
  width: 15px;
  flex: none;
  box-sizing: border-box;
  background: #fff;
  border: 1px solid #aaa;
  display: flex;
  align-items: center;
  justify-content: center;
`;

const HThumb = styled.div`
  width: 447px;
  flex: none;
  box-sizing: border-box;
  background: #fff;
  border: 1px solid #aaa;
`;

const HTrack = styled.div`
  flex: 1;
  background: #d6d6d6;
`;

const StatusBar = styled.div`
  height: 22px;
  flex: none;
  box-sizing: border-box;
  background: #f3f2f1;
  border-top: 1px solid #c6c6c6;
  display: flex;
  align-items: center;
  padding-left: 8px;
`;

const StatusRight = styled.div`
  margin-left: auto;
  height: 100%;
  padding-right: 8px;
  display: flex;
  align-items: center;
`;

const ViewButton = styled.div`
  width: 40px;
  height: 100%;
  display: flex;
  align-items: center;
  justify-content: center;
  background: ${(p) => (p.$active ? "#d0d0d0" : "transparent")};
`;

const ZoomSlider = styled.div`
  margin-left: 5px;
  display: flex;
  align-items: center;
  gap: 6px;
`;

const ZoomTrack = styled.div`
  position: relative;
  width: 100px;
  height: 1px;
  margin-right: -2px;
  background: #aaa;
`;

const ZoomThumb = styled.div`
  position: absolute;
  left: 48px;
  top: -6px;
  width: 5px;
  height: 12px;
  background: #777;
`;

const ZoomValue = styled.div`
  margin-left: 14px;
  font-size: 12.500px;
  color: #555;
`;

const RedFrame = styled.div`
  position: absolute;
  left: 663px;
  top: 226px;
  width: 328px;
  height: 47px;
  box-sizing: border-box;
  border: 7px solid #f00;
  border-radius: 6px;
`;

const Badge = styled.div`
  position: absolute;
  left: ${(p) => p.$x}px;
  top: ${(p) => p.$y}px;
  width: 38px;
  height: 38px;
  border-radius: 50%;
  background: #fff;
  box-shadow: 0 0 3px rgba(0, 0, 0, 0.35);
  display: flex;
  align-items: center;
  justify-content: center;
`;

const BadgeRing = styled.div`
  width: 32px;
  height: 32px;
  box-sizing: border-box;
  border: 1px solid #f00;
  border-radius: 50%;
  color: #f00;
  font-family: "Liberation Sans", sans-serif;
  font-weight: 700;
  font-size: 27px;
  line-height: 30px;
  text-align: center;
`;

const Arrow = styled.svg`
  position: absolute;
  left: 900px;
  top: 275px;
  filter: drop-shadow(1px 2px 2px rgba(0, 0, 0, 0.35));
`;

export default App;
